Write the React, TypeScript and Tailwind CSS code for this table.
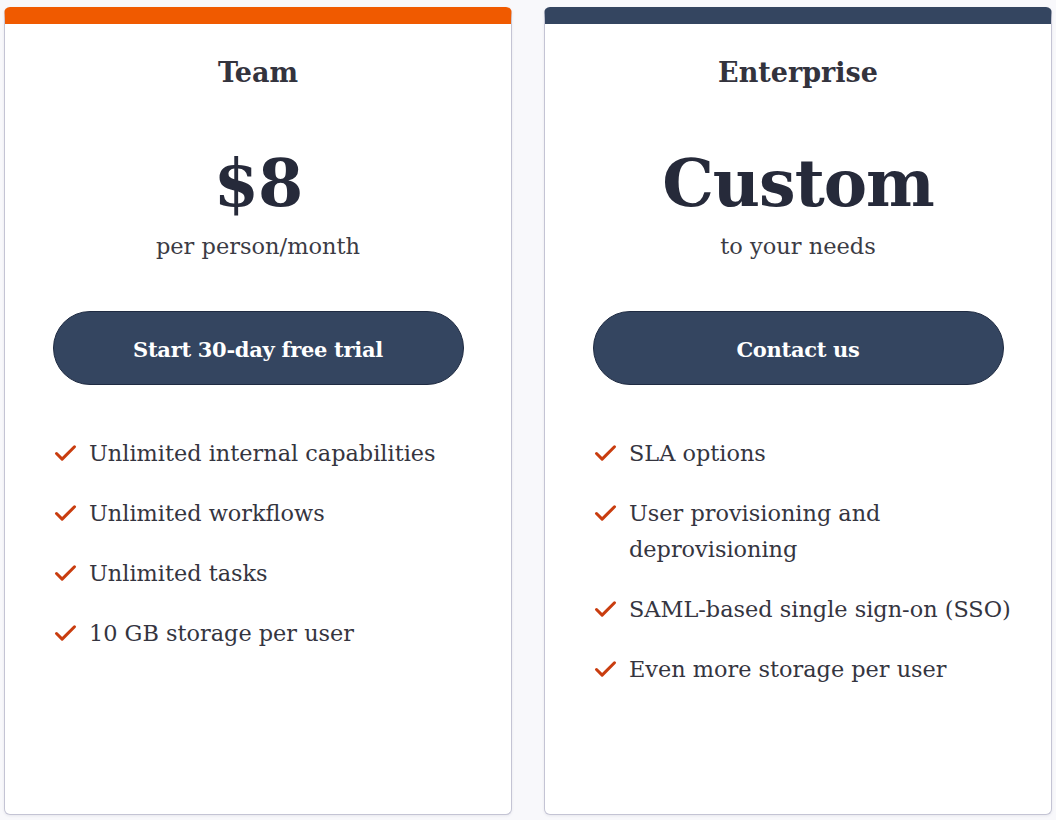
import React from 'react'
import { Check } from 'lucide-react'

type Plan = {
  name: string
  price: string
  note: string
  cta: string
  bar: string
  features: string[]
}

const plans: Plan[] = [
  {
    name: 'Team',
    price: '$8',
    note: 'per person/month',
    cta: 'Start 30-day free trial',
    bar: 'border-t-[#f05a00]',
    features: [
      'Unlimited internal capabilities',
      'Unlimited workflows',
      'Unlimited tasks',
      '10 GB storage per user',
    ],
  },
  {
    name: 'Enterprise',
    price: 'Custom',
    note: 'to your needs',
    cta: 'Contact us',
    bar: 'border-t-[#344560]',
    features: [
      'SLA options',
      'User provisioning and deprovisioning',
      'SAML-based single sign-on (SSO)',
      'Even more storage per user',
    ],
  },
]

function PlanCard({ plan }: { plan: Plan }) {
  return (
    <div
      className={`flex flex-col items-center w-[508px] h-[808px] bg-white border border-[#c4c4d4] border-t-[17px] ${plan.bar} rounded-md shadow-[0_1px_3px_rgba(40,40,80,0.08)]`}
    >
      <h2 className="mt-[31px] text-[27px] leading-[36px] font-bold text-[#33333d]">
        {plan.name}
      </h2>
      <div className="mt-[56px] text-[65px] leading-[72px] font-bold text-[#262a3a] tracking-[-1px]">
        {plan.price}
      </div>
      <div className="mt-[11px] text-[22.5px] leading-[32px] text-[#3b3b44]">
        {plan.note}
      </div>
      <button className="mt-[49px] pt-[4px] w-[411px] h-[74px] rounded-full bg-[#344560] border border-[#1f2b42] text-white text-[21px] font-bold tracking-[-0.3px]">
        {plan.cta}
      </button>
      <ul className="mt-[50px] self-stretch pl-[47px] pr-[30px] flex flex-col gap-6">
        {plan.features.map((f) => (
          <li key={f} className="flex items-start">
            <Check
              className="mt-[5px] shrink-0 text-[#c93d0f]"
              size={27}
              strokeWidth={2.7}
            />
            <span className="ml-[10px] text-[22.4px] leading-[36px] text-[#35353f]">
              {f}
            </span>
          </li>
        ))}
      </ul>
    </div>
  )
}

export default function App() {
  return (
    <div className="min-h-screen bg-[#f8f8fb] font-['DejaVu_Serif',serif]">
      <div className="flex gap-8 pl-1 pt-[7px]">
        {plans.map((p) => (
          <PlanCard key={p.name} plan={p} />
        ))}
      </div>
    </div>
  )
}
